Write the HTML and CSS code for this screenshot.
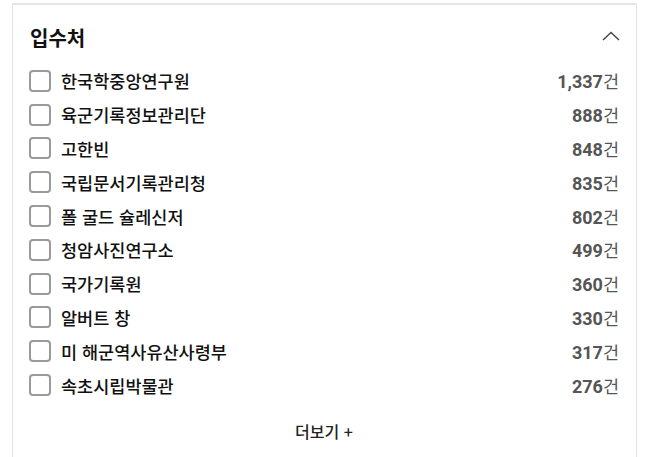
FILE: index.html
```html
<!DOCTYPE html>
<html lang="ko">
<head>
    <meta charset="UTF-8">
    <meta name="viewport" content="width=device-width, initial-scale=1.0">
    <title>입수처</title>
    <link rel="stylesheet" href="styles.css">
</head>
<body>
    <section class="filter-panel">
        <div class="filter-head">
            <h2>입수처</h2>
            <button class="toggle" type="button" aria-label="접기">
                <svg width="18" height="10" viewBox="0 0 18 10"><path d="M1 9 L9 1.5 L17 9" fill="none" stroke="#444" stroke-width="1.4"/></svg>
            </button>
        </div>
        <ul class="filter-list">
            <li><label><span class="box"></span><span class="name">한국학중앙연구원</span></label><span class="count"><b>1,337</b>건</span></li>
            <li><label><span class="box"></span><span class="name">육군기록정보관리단</span></label><span class="count"><b>888</b>건</span></li>
            <li><label><span class="box"></span><span class="name">고한빈</span></label><span class="count"><b>848</b>건</span></li>
            <li><label><span class="box"></span><span class="name">국립문서기록관리청</span></label><span class="count"><b>835</b>건</span></li>
            <li><label><span class="box"></span><span class="name">폴 굴드 슐레신저</span></label><span class="count"><b>802</b>건</span></li>
            <li><label><span class="box"></span><span class="name">청암사진연구소</span></label><span class="count"><b>499</b>건</span></li>
            <li><label><span class="box"></span><span class="name">국가기록원</span></label><span class="count"><b>360</b>건</span></li>
            <li><label><span class="box"></span><span class="name">알버트 창</span></label><span class="count"><b>330</b>건</span></li>
            <li><label><span class="box"></span><span class="name">미 해군역사유산사령부</span></label><span class="count"><b>317</b>건</span></li>
            <li><label><span class="box"></span><span class="name">속초시립박물관</span></label><span class="count"><b>276</b>건</span></li>
        </ul>
        <div class="more">더보기 +</div>
    </section>
</body>
</html>
```

FILE: styles.css
```css
body {
    margin: 0;
    padding: 3px 0 0 12px;
    background-color: #ffffff;
    font-family: 'Noto Sans CJK KR', 'Noto Sans', sans-serif;
    color: #222222;
}
.filter-panel {
    width: 590px;
    height: 452px;
    padding: 0 17px 0 16px;
    border: 1px solid #e6e6e6;
    border-top: 2px solid #e6e6e6;
    border-bottom: none;
    overflow: hidden;
}
.filter-head {
    display: flex;
    justify-content: space-between;
    align-items: center;
    height: 59px;
}
.filter-head h2 {
    margin: 5px 0 0 1px;
    font-size: 20px;
    font-weight: 700;
    color: #111111;
}
.toggle {
    background: none;
    border: none;
    padding: 0;
    margin: 2px -1px 0 0;
    display: flex;
}
.filter-list {
    list-style: none;
    margin: 0;
    padding: 0;
}
.filter-list li {
    display: flex;
    justify-content: space-between;
    align-items: center;
    height: 33.8px;
}
.filter-list label {
    display: flex;
    align-items: center;
    gap: 10px;
}
.box {
    width: 18px;
    height: 18px;
    border: 2px solid #9a9a9a;
    border-radius: 4px;
}
.name {
    font-size: 17.5px;
    font-weight: 500;
    color: #111111;
}
.count {
    font-size: 17.5px;
    color: #555555;
}
.count b {
    font-family: Roboto, sans-serif;
    font-size: 18px;
    font-weight: 700;
}
.more {
    text-align: center;
    margin-top: 17px;
    font-size: 16px;
    font-weight: 500;
    color: #222222;
}
```
